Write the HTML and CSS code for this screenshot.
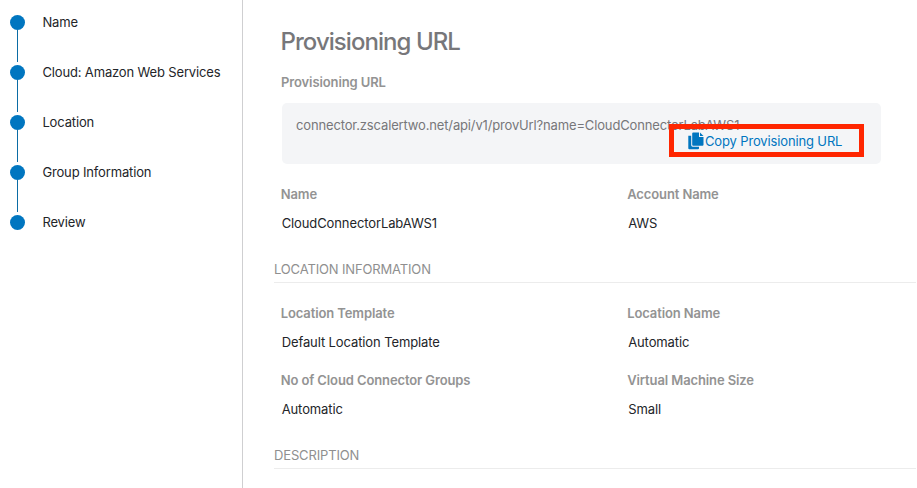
FILE: index.html
```html
<!DOCTYPE html>
<html lang="en">
<head>
<meta charset="utf-8">
<title>Provisioning URL</title>
<link rel="stylesheet" href="styles.css">
</head>
<body>
<div class="page">
  <nav class="sidebar">
    <ol class="steps">
      <li class="step"><span class="dot"></span><span class="step-name">Name</span></li>
      <li class="step"><span class="dot"></span><span class="step-name">Cloud: Amazon Web Services</span></li>
      <li class="step"><span class="dot"></span><span class="step-name">Location</span></li>
      <li class="step"><span class="dot"></span><span class="step-name">Group Information</span></li>
      <li class="step"><span class="dot"></span><span class="step-name">Review</span></li>
    </ol>
  </nav>
  <main class="content">
    <h1 class="title">Provisioning URL</h1>
    <div class="label url-label">Provisioning URL</div>
    <div class="url-box">
      <span class="url">connector.zscalertwo.net/api/v1/provUrl?name=CloudConnectorLabAWS1</span>
      <button class="copy" type="button">
        <svg class="copy-icon" width="16" height="18" viewBox="0 0 16 18" aria-hidden="true">
          <path d="M0.300 3.700H3.200V13.300Q3.200 14.700 4.600 14.700H11V16.200Q11 17.200 10 17.200H1.300Q0.300 17.200 0.300 16.200Z"/>
          <path d="M5.200 0.500H11V5H15.500V12.800Q15.500 13.800 14.500 13.800H5.200Q4.200 13.800 4.200 12.800V1.500Q4.200 0.500 5.200 0.500Z"/>
          <path d="M12 0.500L15.500 4H12Z"/>
        </svg>
        <span>Copy Provisioning URL</span>
      </button>
    </div>
    <dl class="fields">
      <div class="field"><dt class="label">Name</dt><dd class="value">CloudConnectorLabAWS1</dd></div>
      <div class="field"><dt class="label">Account Name</dt><dd class="value">AWS</dd></div>
    </dl>
    <h2 class="section">LOCATION INFORMATION</h2>
    <dl class="fields">
      <div class="field"><dt class="label">Location Template</dt><dd class="value">Default Location Template</dd></div>
      <div class="field"><dt class="label">Location Name</dt><dd class="value">Automatic</dd></div>
      <div class="field"><dt class="label">No of Cloud Connector Groups</dt><dd class="value">Automatic</dd></div>
      <div class="field"><dt class="label">Virtual Machine Size</dt><dd class="value">Small</dd></div>
    </dl>
    <h2 class="section">DESCRIPTION</h2>
  </main>
</div>
</body>
</html>
```
FILE: styles.css
```css
* { box-sizing: border-box; }

body {
  margin: 0;
  background: #fff;
  color: #232529;
  font: 13px/18px Inter, "Liberation Sans", sans-serif;
  letter-spacing: -0.11px;
}

.page {
  display: flex;
  height: 488px;
  overflow: hidden;
}

.sidebar {
  flex: none;
  width: 243px;
  padding: 15px 0 0 10px;
  border-right: 1px solid #cfcfd1;
}

.steps {
  margin: 0;
  padding: 0;
  list-style: none;
}

.step {
  position: relative;
  display: flex;
  gap: 17.400px;
  height: 50px;
}

.step:not(:last-child)::after {
  content: "";
  position: absolute;
  top: 15px;
  left: 7px;
  width: 1px;
  height: 32px;
  background: #0b6ca5;
}

.dot {
  width: 15px;
  height: 15px;
  border-radius: 50%;
  background: #0076c0;
}

.step-name {
  line-height: 15px;
  letter-spacing: -0.15px;
}

.content {
  flex: 1;
  padding: 27px 1px 0 31px;
}

.title {
  margin: 0 0 16px 6.500px;
  color: #77777a;
  font-size: 24px;
  font-weight: 550;
  line-height: 30px;
  letter-spacing: -0.95px;
}

.label {
  color: #939393;
  font-weight: 600;
}

.url-label { margin: 0 0 12px 7px; }

.url-box {
  position: relative;
  width: 599.500px;
  height: 61px;
  margin-left: 7.500px;
  padding: 13px 14.500px;
  border-radius: 5px;
  background: #f4f5f7;
  color: #77777a;
  letter-spacing: -0.15px;
}

.copy {
  position: absolute;
  top: 21px;
  right: 17.500px;
  display: flex;
  align-items: center;
  width: 195px;
  height: 33px;
  padding: 0 0 0 14.500px;
  border: 5px solid #ff2600;
  background: none;
  color: #0076c0;
  font: inherit;
  letter-spacing: -0.14px;
}

.copy-icon {
  flex: none;
  margin-right: 1px;
  fill: #0076c0;
}

.fields {
  display: grid;
  grid-template-columns: 346.500px 1fr;
  row-gap: 20px;
  margin: 21px 0 28px 6.700px;
}

.value {
  margin: 11px 0 0 1px;
}

.section {
  height: 23px;
  margin: 0;
  border-bottom: 1px solid #ececec;
  color: #8f8f8f;
  font-size: 13px;
  font-weight: 400;
  line-height: 18px;
  letter-spacing: -0.15px;
}
```
